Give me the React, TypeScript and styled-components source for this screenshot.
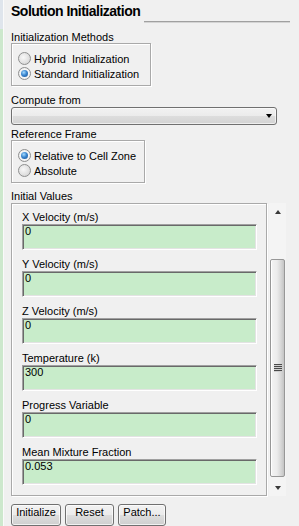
import React from 'react';
import styled, { createGlobalStyle } from 'styled-components';

const GlobalStyle = createGlobalStyle`
  html, body {
    margin: 0;
    padding: 0;
    background: #f0f0f0;
  }
  body {
    font-family: "Liberation Sans", Arial, sans-serif;
    font-size: 11px;
    color: #000;
  }
`;

const Window = styled.div`
  width: 299px;
  height: 526px;
  overflow: hidden;
  display: flex;
  background: #f0f0f0;
`;

const LeftEdge = styled.div`
  width: 3px;
  flex: none;
  background: linear-gradient(to bottom, #dfe5ec 0, #dfe5ec 29px, #cde8cd 29px, #cde8cd 100%);
  border-right: 1px solid #fafafa;
`;

const Panel = styled.div`
  flex: 1;
  display: flex;
  flex-direction: column;
  padding: 0 9px 0 7px;
`;

const TitleRow = styled.div`
  display: flex;
  align-items: flex-end;
  padding-top: 1px;
  height: 20px;
  margin-right: 0;
`;

const Title = styled.div`
  font-size: 14px;
  font-weight: bold;
  letter-spacing: -0.5px;
  line-height: 20px;
  white-space: nowrap;
`;

const TitleRule = styled.div`
  flex: 1;
  height: 1px;
  margin-left: 4px;
  margin-bottom: -1px;
  background: #a0a0a0;
  box-shadow: 0 1px 0 #d4d4d4;
`;

const SectionLabel = styled.div<{ $top: number; $lh?: number }>`
  margin-top: ${p => p.$top}px;
  line-height: ${p => p.$lh ?? 13}px;
  white-space: nowrap;
`;

const GroupBox = styled.div<{ $width: number }>`
  width: ${p => p.$width}px;
  box-sizing: border-box;
  border: 1px solid #a9a9a9;
  box-shadow: inset 1px 1px 0 #fff, 1px 1px 0 #fff;
  padding: 7px 0 4px 6px;
  display: flex;
  flex-direction: column;
`;

const RadioRow = styled.label`
  display: flex;
  align-items: center;
  gap: 3px;
  height: 15px;
  white-space: pre;
`;

const Radio = styled.span<{ $checked?: boolean }>`
  width: 13px;
  height: 13px;
  flex: none;
  box-sizing: border-box;
  border-radius: 50%;
  border: 1px solid #8e8f8f;
  background: ${p =>
    p.$checked
      ? 'radial-gradient(circle at 50% 50%, #ffffff 0, #f4f4f4 60%, #dcdcdc 100%)'
      : 'radial-gradient(circle at 40% 40%, #f8f8f8 0, #e2e2e2 55%, #c9c9c9 100%)'};
  display: flex;
  align-items: center;
  justify-content: center;
  &::after {
    content: '';
    width: 7px;
    height: 7px;
    border-radius: 50%;
    background: ${p =>
      p.$checked ? 'radial-gradient(circle at 40% 35%, #a6dcff 0, #3a86d0 45%, #174f8f 100%)' : 'transparent'};
  }
`;

const Select = styled.div`
  width: 266px;
  height: 22px;
  box-sizing: border-box;
  border: 1px solid #707070;
  border-radius: 3px;
  background: linear-gradient(to bottom, #f2f2f2 0, #ebebeb 50%, #dddddd 51%, #d3d3d3 100%);
  box-shadow: inset 0 0 0 1px rgba(255, 255, 255, 0.6);
  display: flex;
  align-items: center;
  justify-content: flex-end;
  padding-right: 4px;
`;

const DownCaret = styled.span<{ $color?: string }>`
  width: 0;
  height: 0;
  border-left: 3.5px solid transparent;
  border-right: 3.5px solid transparent;
  border-top: 4px solid ${p => p.$color ?? '#000'};
`;

const UpCaret = styled.span`
  width: 0;
  height: 0;
  border-left: 3.5px solid transparent;
  border-right: 3.5px solid transparent;
  border-bottom: 4px solid #3a3a3a;
`;

const ValuesRow = styled.div`
  display: flex;
  gap: 2px;
`;

const ValuesBox = styled.div`
  width: 256px;
  box-sizing: border-box;
  border: 1px solid #a9a9a9;
  box-shadow: inset 1px 1px 0 #fff, 1px 1px 0 #fff;
  padding: 7px 9px 10px 10px;
  display: flex;
  flex-direction: column;
  gap: 8px;
`;

const Field = styled.div`
  display: flex;
  flex-direction: column;
`;

const FieldLabel = styled.div`
  line-height: 13px;
  white-space: nowrap;
`;

const FieldBox = styled.div`
  height: 26px;
  box-sizing: border-box;
  border: 1px solid;
  border-color: #a0a0a0 #ffffff #ffffff #a0a0a0;
  box-shadow: inset 1px 1px 0 #696969, inset -1px -1px 0 #e3e3e3;
  background: #c8ecca;
  padding: 0 0 0 2px;
  line-height: 13px;
`;

const ScrollBar = styled.div`
  width: 17px;
  box-sizing: border-box;
  background: #f4f4f4;
  display: flex;
  flex-direction: column;
  padding: 0 1px;
`;

const ScrollButton = styled.div`
  height: 17px;
  flex: none;
  display: flex;
  align-items: center;
  justify-content: center;
`;

const Track = styled.div`
  flex: 1;
  display: flex;
  flex-direction: column;
`;

const Thumb = styled.div`
  box-sizing: border-box;
  border: 1px solid #979797;
  border-radius: 2px;
  background: linear-gradient(to right, #f4f4f4 0, #ececec 45%, #d8d8d8 75%, #c4c4c4 100%);
  box-shadow: inset 1px 0 0 #fff;
  display: flex;
  align-items: center;
  justify-content: center;
`;

const Grip = styled.div`
  width: 8px;
  height: 8px;
  margin-left: 1px;
  background: repeating-linear-gradient(to bottom, #4a4a4a 0, #4a4a4a 1px, #d0d0d0 1px, #d0d0d0 2px);
`;

const ButtonRow = styled.div`
  display: flex;
  gap: 4px;
  margin-top: 8px;
`;

const Button = styled.button<{ $width: number }>`
  width: ${p => p.$width}px;
  height: 22px;
  box-sizing: border-box;
  border: 1px solid #707070;
  border-radius: 3px;
  background: linear-gradient(to bottom, #f2f2f2 0, #ebebeb 50%, #dddddd 51%, #cfcfcf 100%);
  box-shadow: inset 0 0 0 1px rgba(255, 255, 255, 0.7);
  font-family: "Liberation Sans", Arial, sans-serif;
  font-size: 11px;
  color: #000;
  padding: 1px 0 0;
  display: flex;
  align-items: flex-start;
  justify-content: center;
  line-height: 13px;
`;

const fields = [
  { label: 'X Velocity (m/s)', value: '0' },
  { label: 'Y Velocity (m/s)', value: '0' },
  { label: 'Z Velocity (m/s)', value: '0' },
  { label: 'Temperature (k)', value: '300' },
  { label: 'Progress Variable', value: '0' },
  { label: 'Mean Mixture Fraction', value: '0.053' },
];

export default function App() {
  return (
    <Window>
      <GlobalStyle />
      <LeftEdge />
      <Panel>
        <TitleRow>
          <Title>Solution Initialization</Title>
          <TitleRule />
        </TitleRow>

        <SectionLabel $top={10} $lh={12}>Initialization Methods</SectionLabel>
        <GroupBox $width={140}>
          <RadioRow><Radio />{'Hybrid  Initialization'}</RadioRow>
          <RadioRow><Radio $checked />Standard Initialization</RadioRow>
        </GroupBox>

        <SectionLabel $top={8}>Compute from</SectionLabel>
        <Select>
          <DownCaret />
        </Select>

        <SectionLabel $top={3} $lh={12}>Reference Frame</SectionLabel>
        <GroupBox $width={134}>
          <RadioRow><Radio $checked />Relative to Cell Zone</RadioRow>
          <RadioRow><Radio />Absolute</RadioRow>
        </GroupBox>

        <SectionLabel $top={7}>Initial Values</SectionLabel>
        <ValuesRow>
          <ValuesBox>
            {fields.map(f => (
              <Field key={f.label}>
                <FieldLabel>{f.label}</FieldLabel>
                <FieldBox>{f.value}</FieldBox>
              </Field>
            ))}
          </ValuesBox>
          <ScrollBar>
            <ScrollButton><UpCaret /></ScrollButton>
            <Track>
              <Thumb style={{ marginTop: 39, height: 218 }}>
                <Grip />
              </Thumb>
            </Track>
            <ScrollButton><DownCaret $color="#3a3a3a" /></ScrollButton>
          </ScrollBar>
        </ValuesRow>

        <ButtonRow>
          <Button $width={50}>Initialize</Button>
          <Button $width={49}>Reset</Button>
          <Button $width={48}>Patch...</Button>
        </ButtonRow>
      </Panel>
    </Window>
  );
}
